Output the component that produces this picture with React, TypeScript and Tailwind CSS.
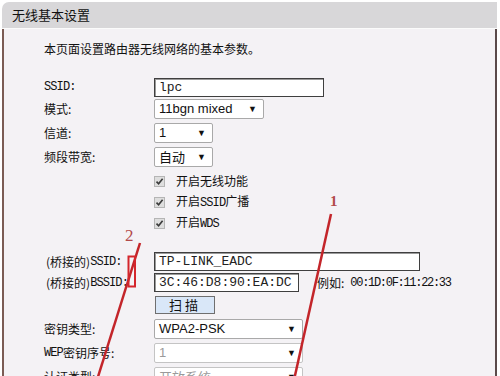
import React from "react";

const CJK = { fontFamily: '"Noto Sans CJK SC", "Liberation Sans", sans-serif' };
const MONO = { fontFamily: '"Liberation Mono", "Noto Sans CJK SC", monospace' };
const SANS = { fontFamily: '"Liberation Sans", "Noto Sans CJK SC", sans-serif' };

function L({ children }: { children: React.ReactNode }) {
  return (
    <span className="text-[12px] tracking-[-0.9px]" style={MONO}>
      {children}
    </span>
  );
}

function Label({ children }: { children: React.ReactNode }) {
  return (
    <div className="w-[110px] shrink-0 text-[12px] text-[#111] flex items-center" style={CJK}>
      {children}
    </div>
  );
}

function Arrow() {
  return (
    <span className="text-[9px] leading-none text-[#111]" style={SANS}>
      ▼
    </span>
  );
}

function Select({ w, value, dim, cjk }: { w: string; value: string; dim?: boolean; cjk?: boolean }) {
  return (
    <div
      className={`${w} h-[20px] bg-white border rounded-[2px] flex items-center justify-between pl-[4px] pr-[6px] ${
        dim ? "border-[#c4c4c4] text-[#9a9a9a]" : "border-[#a9a9a9] text-[#111]"
      }`}
    >
      <span className="text-[13px]" style={cjk ? CJK : SANS}>
        {value}
      </span>
      <Arrow />
    </div>
  );
}

function Input({ w, value }: { w: string; value: string }) {
  return (
    <div
      className={`${w} h-[19px] bg-white border border-[#3f3f3f] shadow-[inset_1px_1px_0_#9a9a9a] flex items-center pl-[4px] text-[13px] text-[#222]`}
      style={MONO}
    >
      {value}
    </div>
  );
}

function Check({ children }: { children: React.ReactNode }) {
  return (
    <div className="flex items-center h-[20px]">
      <div className="w-[11px] h-[11px] bg-[#dedede] border border-[#b5b5b5] flex items-center justify-center">
        <svg width="9" height="9" viewBox="0 0 9 9">
          <path d="M1.5 4.6 L3.6 6.8 L7.6 1.8" fill="none" stroke="#3a3a3a" strokeWidth="1.6" />
        </svg>
      </div>
      <span className="ml-[11px] text-[12px] text-[#111]" style={CJK}>
        {children}
      </span>
    </div>
  );
}

export default function App() {
  return (
    <div className="w-[500px] h-[376px] bg-white relative overflow-hidden pt-[2px]" style={CJK}>
      <div className="ml-[2px] mr-[3px] h-[27px] bg-[#d8d7d9] rounded-tl-[7px] pl-[10px] flex items-center text-[13px] text-[#111] border-b border-[#fbfbfb]">
        无线基本设置
      </div>
      <div className="ml-[2px] mr-[3px] h-[360px] bg-[#f4f2f5] border-l-2 border-[#7b5c54] border-r-2 border-r-[#5a4a4a] pl-[40px]">
        <div className="pt-[12px] h-[28px] text-[12px] text-[#111] leading-[16px]">本页面设置路由器无线网络的基本参数。</div>

        <div className="flex mt-[21px] h-[18px]">
          <Label>
            <L>SSID:</L>
          </Label>
          <Input w="w-[170px]" value="lpc" />
        </div>
        <div className="flex mt-[3px] h-[20px]">
          <Label>模式:</Label>
          <Select w="w-[110px]" value="11bgn mixed" />
        </div>
        <div className="flex mt-[4px] h-[20px]">
          <Label>信道:</Label>
          <Select w="w-[59px]" value="1" />
        </div>
        <div className="flex mt-[4px] h-[20px]">
          <Label>频段带宽:</Label>
          <Select w="w-[59px]" value="自动" cjk />
        </div>
        <div className="flex mt-[4px]">
          <div className="w-[110px]" />
          <Check>开启无线功能</Check>
        </div>
        <div className="flex mt-[1px]">
          <div className="w-[110px]" />
          <Check>
            开启<L>SSID</L>广播
          </Check>
        </div>
        <div className="flex mt-[1px]">
          <div className="w-[110px]" />
          <Check>
            开启<L>WDS</L>
          </Check>
        </div>

        <div className="flex mt-[19px] h-[19px]">
          <Label>
            <span className="ml-[2px]">(桥接的)</span>
            <L>SSID:</L>
          </Label>
          <Input w="w-[266px]" value="TP-LINK_EADC" />
        </div>
        <div className="flex mt-[2px] h-[19px]">
          <Label>
            <span className="ml-[2px]">(桥接的)</span>
            <L>BSSID:</L>
          </Label>
          <Input w="w-[145px]" value="3C:46:D8:90:EA:DC" />
          <div className="ml-[18px] flex items-center text-[12px] text-[#111]">
            例如:
            <span className="ml-[6px] text-[12px] tracking-[-1.3px]" style={MONO}>
              00:1D:0F:11:22:33
            </span>
          </div>
        </div>
        <div className="flex mt-[4px] h-[18px]">
          <div className="w-[111px]" />
          <div className="w-[60px] h-[18px] bg-[#d9e7f8] border border-[#6f6f6f] flex items-center justify-center text-[13px] text-[#111] tracking-[3px]">
            扫描
          </div>
        </div>
        <div className="flex mt-[5px] h-[20px]">
          <Label>密钥类型:</Label>
          <Select w="w-[149px]" value="WPA2-PSK" />
        </div>
        <div className="flex mt-[4px] h-[20px]">
          <Label>
            <L>WEP</L>密钥序号:
          </Label>
          <Select w="w-[149px]" value="1" dim />
        </div>
        <div className="flex mt-[4px] h-[20px]">
          <Label>认证类型:</Label>
          <Select w="w-[149px]" value="开放系统" dim cjk />
        </div>
      </div>

      <svg className="absolute left-0 top-0 pointer-events-none" width="500" height="376" viewBox="0 0 500 376">
        <line x1="140" y1="243" x2="97" y2="380" stroke="#c3252a" strokeWidth="2.5" />
        <line x1="331" y1="214" x2="294" y2="380" stroke="#c3252a" strokeWidth="2.5" />
        <rect x="128.5" y="256.5" width="6.5" height="30" fill="none" stroke="#d4262c" strokeWidth="2" />
      </svg>
      <div
        className="absolute left-[125px] top-[227px] text-[17px] leading-none text-[#b24a4a]"
        style={{ fontFamily: '"Liberation Serif", serif' }}
      >
        2
      </div>
      <div
        className="absolute left-[330px] top-[194px] text-[15px] leading-none text-[#b24a4a] font-bold"
        style={{ fontFamily: '"Liberation Serif", serif' }}
      >
        1
      </div>
    </div>
  );
}
